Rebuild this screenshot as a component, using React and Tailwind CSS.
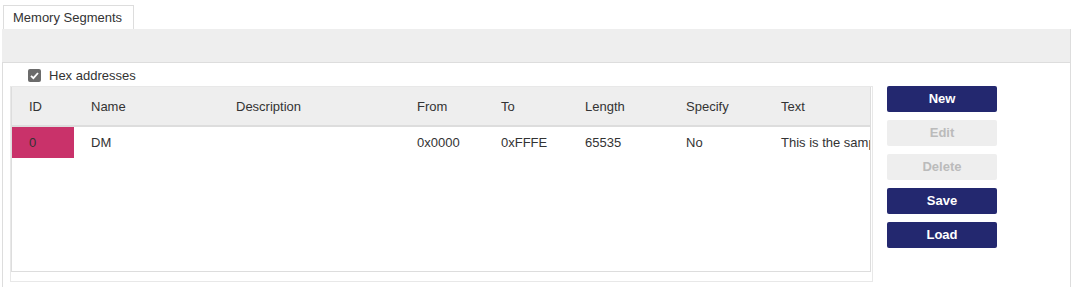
import React from "react";

const cols = [
  { label: "ID", w: "w-[62px]" },
  { label: "Name", w: "w-[145px]" },
  { label: "Description", w: "w-[181px]" },
  { label: "From", w: "w-[84px]" },
  { label: "To", w: "w-[84px]" },
  { label: "Length", w: "w-[101px]" },
  { label: "Specify", w: "w-[95px]" },
  { label: "Text", w: "flex-1 min-w-0" },
];

const row = ["0", "DM", "", "0x0000", "0xFFFE", "65535", "No", "This is the sample memory segment"];

function Btn({ children, disabled }) {
  return (
    <button
      className={
        disabled
          ? "h-[26px] w-[110px] rounded-[2px] bg-[#eeeeee] text-[13px] font-bold text-[#bbbbbb]"
          : "h-[26px] w-[110px] rounded-[2px] bg-[#23286f] text-[13px] font-bold text-white"
      }
    >
      {children}
    </button>
  );
}

export default function App() {
  return (
    <div className="w-[1081px] h-[287px] bg-white overflow-hidden text-[13px] text-[#333333] font-['Liberation_Sans',Arial,sans-serif]">
      <div className="w-[1069px] ml-[2px] pt-[5px]">
        <div className="ml-[1px] flex">
          <div className="h-[24px] w-[131px] border border-b-0 border-[#dddddd] bg-white pl-[9px] pt-[4px] leading-[15px]">
            Memory Segments
          </div>
        </div>
        <div className="h-[34px] bg-[#eeeeee] border-b border-r border-[#dddddd]" />
        <div className="h-[224px] border-l border-r border-[#dddddd]">
          <div className="flex items-center h-[23px] pl-[25px] pt-[1px]">
            <div className="w-[13px] h-[13px] rounded-[2px] bg-[#6b6b6b] flex items-center justify-center">
              <svg width="11" height="11" viewBox="0 0 11 11">
                <path d="M2 5.8 L4.4 8.2 L9 3" stroke="white" strokeWidth="1.8" fill="none" />
              </svg>
            </div>
            <span className="ml-[8px] leading-[15px]">Hex addresses</span>
          </div>
          <div className="flex">
            <div className="ml-[7px] w-[863px] h-[196px] border border-[#e8e8e8]">
              <div className="w-[860px] h-[185px] border border-t-0 border-[#dddddd] flex flex-col">
                <div className="flex h-[40px] bg-[#eeeeee] border-b-2 border-[#dddddd]">
                  {cols.map((c) => (
                    <div key={c.label} className={`${c.w} pl-[17px] flex items-center pt-[1px]`}>
                      {c.label}
                    </div>
                  ))}
                </div>
                <div className="flex h-[31px]">
                  {cols.map((c, i) => (
                    <div
                      key={c.label}
                      className={`${c.w} ${i === 0 ? "bg-[#c9326a]" : ""} pl-[17px] flex items-center overflow-hidden whitespace-nowrap`}
                    >
                      {row[i]}
                    </div>
                  ))}
                </div>
              </div>
            </div>
            <div className="ml-[14px] flex flex-col gap-[8px]">
              <Btn>New</Btn>
              <Btn disabled>Edit</Btn>
              <Btn disabled>Delete</Btn>
              <Btn>Save</Btn>
              <Btn>Load</Btn>
            </div>
          </div>
        </div>
      </div>
    </div>
  );
}
